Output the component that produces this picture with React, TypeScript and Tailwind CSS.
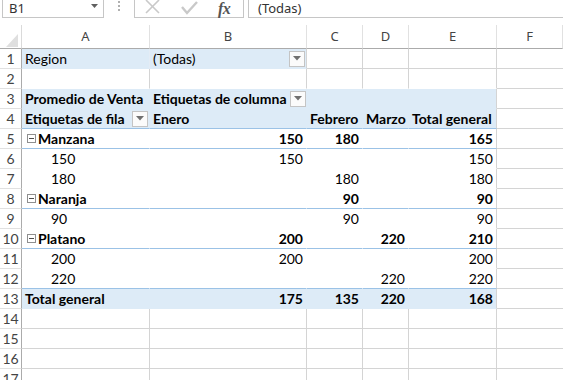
import React from "react";

type CellDef = {
  t?: string;
  b?: boolean;
  right?: boolean;
  indent?: boolean;
  minus?: boolean;
  drop?: "end" | "after";
};

type RowDef = {
  n: number;
  cells: CellDef[]; // A..E
  fill?: number; // how many columns (from A) get the blue fill
  pivot?: boolean;
  blue?: boolean; // blue line under the row
  noBottom?: boolean; // gridline hidden by the row below
};

const rows: RowDef[] = [
  { n: 1, fill: 2, cells: [{ t: "Region" }, { t: "(Todas)", drop: "end" }, {}, {}, {}] },
  { n: 2, noBottom: true, cells: [{}, {}, {}, {}, {}] },
  {
    n: 3,
    fill: 5,
    pivot: true,
    cells: [{ t: "Promedio de Venta", b: true }, { t: "Etiquetas de columna", b: true, drop: "after" }, {}, {}, {}],
  },
  {
    n: 4,
    fill: 5,
    pivot: true,
    blue: true,
    cells: [
      { t: "Etiquetas de fila", b: true, drop: "end" },
      { t: "Enero", b: true },
      { t: "Febrero", b: true },
      { t: "Marzo", b: true },
      { t: "Total general", b: true },
    ],
  },
  {
    n: 5,
    pivot: true,
    blue: true,
    cells: [
      { t: "Manzana", b: true, minus: true },
      { t: "150", b: true, right: true },
      { t: "180", b: true, right: true },
      {},
      { t: "165", b: true, right: true },
    ],
  },
  { n: 6, pivot: true, cells: [{ t: "150", indent: true }, { t: "150", right: true }, {}, {}, { t: "150", right: true }] },
  { n: 7, pivot: true, cells: [{ t: "180", indent: true }, {}, { t: "180", right: true }, {}, { t: "180", right: true }] },
  {
    n: 8,
    pivot: true,
    blue: true,
    cells: [{ t: "Naranja", b: true, minus: true }, {}, { t: "90", b: true, right: true }, {}, { t: "90", b: true, right: true }],
  },
  { n: 9, pivot: true, cells: [{ t: "90", indent: true }, {}, { t: "90", right: true }, {}, { t: "90", right: true }] },
  {
    n: 10,
    pivot: true,
    blue: true,
    cells: [
      { t: "Platano", b: true, minus: true },
      { t: "200", b: true, right: true },
      {},
      { t: "220", b: true, right: true },
      { t: "210", b: true, right: true },
    ],
  },
  { n: 11, pivot: true, cells: [{ t: "200", indent: true }, { t: "200", right: true }, {}, {}, { t: "200", right: true }] },
  {
    n: 12,
    pivot: true,
    blue: true,
    cells: [{ t: "220", indent: true }, {}, {}, { t: "220", right: true }, { t: "220", right: true }],
  },
  {
    n: 13,
    fill: 5,
    pivot: true,
    noBottom: true,
    cells: [
      { t: "Total general", b: true },
      { t: "175", b: true, right: true },
      { t: "135", b: true, right: true },
      { t: "220", b: true, right: true },
      { t: "168", b: true, right: true },
    ],
  },
  { n: 14, cells: [{}, {}, {}, {}, {}] },
  { n: 15, cells: [{}, {}, {}, {}, {}] },
  { n: 16, cells: [{}, {}, {}, {}, {}] },
  { n: 17, cells: [{}, {}, {}, {}, {}] },
];

const DropButton = () => (
  <div className="w-[16px] h-[16px] shrink-0 border border-[#c4c4c4] bg-[#fbfbfb] flex items-center justify-center">
    <svg width="8" height="5" viewBox="0 0 8 5">
      <path d="M0 0 L8 0 L4 4.5 Z" fill="#707070" />
    </svg>
  </div>
);

const MinusBox = () => (
  <div className="w-[9px] h-[9px] shrink-0 border border-[#8f8f8f] bg-white flex items-center justify-center mr-[2px]">
    <div className="w-[5px] h-[1px] bg-[#4d4d4d]" />
  </div>
);

function Cell({ c, row, col }: { c: CellDef; row: RowDef; col: number }) {
  const filled = row.fill !== undefined && col < row.fill;
  let right = "border-r-[#d4d4d4]";
  let bottom = "border-b-[#d4d4d4]";
  if (row.pivot) {
    right = col === 4 ? "border-r-[#d4d4d4]" : "border-r-transparent";
    bottom = row.blue ? "border-b-[#9bc2e6]" : "border-b-transparent";
  }
  if (row.n === 1 && col === 0) right = "border-r-[#e4ecf5]";
  if (row.noBottom) bottom = "border-b-transparent";
  if (row.n === 1 && col < 2) bottom = "border-b-transparent";

  return (
    <div
      className={`h-[20px] border-r border-b ${right} ${bottom} ${filled ? "bg-[#ddebf7]" : "bg-white"} flex items-center overflow-visible whitespace-nowrap leading-[19px] ${
        c.right ? "justify-end pr-[3px]" : c.drop === "end" ? "justify-between pl-[3px] pr-[1px]" : "pl-[3px]"
      } ${c.indent ? "pl-[29px]" : ""} ${c.minus ? "pl-[5px]" : ""} ${c.b ? "font-bold" : ""}`}
    >
      {c.minus && <MinusBox />}
      {c.t && <span>{c.t}</span>}
      {c.drop === "after" && (
        <span className="ml-[4px]">
          <DropButton />
        </span>
      )}
      {c.drop === "end" && <DropButton />}
    </div>
  );
}

export default function App() {
  const cols = ["A", "B", "C", "D", "E", "F"];
  return (
    <div className="w-[563px] h-[380px] overflow-hidden bg-white text-black">
      {/* formula bar */}
      <div className="h-[25px] flex items-start font-['Noto_Sans',sans-serif] text-[13px] text-[#333]">
        <div className="w-[102px] h-[18px] ml-[2px] border-l border-r border-b border-[#c6c6c6] flex items-center justify-between pl-[6px] pr-[5px]">
          <span className="leading-[14px] -mt-[1px]">B1</span>
          <svg width="7" height="4" viewBox="0 0 7 4" className="-mt-[6px]">
            <path d="M0 0 L7 0 L3.5 4 Z" fill="#606060" />
          </svg>
        </div>
        <div className="w-[30px] h-[16px] flex flex-col items-center justify-start gap-[2px] pt-[1px]">
          <div className="w-[2px] h-[2px] bg-[#b0b0b0]" />
          <div className="w-[2px] h-[2px] bg-[#b0b0b0]" />
          <div className="w-[2px] h-[2px] bg-[#b0b0b0]" />
        </div>
        <div className="w-[110px] h-[18px] border-l border-r border-b border-[#c6c6c6] flex items-center pl-[10px] gap-[20px]">
          <svg width="16" height="14" viewBox="0 0 16 14" className="-mt-[4px]">
            <path d="M1 0 L14 13 M14 0 L1 13" stroke="#c9c9c9" strokeWidth="1.6" fill="none" />
          </svg>
          <svg width="17" height="14" viewBox="0 0 17 14" className="-mt-[2px]">
            <path d="M1 6 L6 12 L16 1" stroke="#c9c9c9" strokeWidth="2.4" fill="none" />
          </svg>
          <span className="font-['Liberation_Serif',serif] italic font-bold text-[16px] leading-[16px] text-[#555] tracking-[-0.5px] pr-[2px]">
            fx
          </span>
        </div>
        <div className="flex-1 h-[18px] ml-[4px] border-l border-b border-[#c6c6c6] flex items-center pl-[9px]">
          <span className="leading-[14px] -mt-[1px]">(Todas)</span>
        </div>
      </div>

      {/* sheet */}
      <div className="font-['Lato',sans-serif] text-[14px]">
        <div className="grid grid-cols-[22px_128px_157px_56px_46px_88px_1fr]">
          <div className="h-[24px] border-r border-b border-r-[#dadada] border-b-[#ababab] relative">
            <svg width="12" height="13" viewBox="0 0 12 13" className="absolute right-[3px] bottom-[1px]">
              <path d="M12 0 L12 13 L0 13 Z" fill="#dfdfdf" />
            </svg>
          </div>
          {cols.map((c) => (
            <div
              key={c}
              className="h-[24px] border-r border-b border-r-[#e1e1e1] border-b-[#ababab] flex items-center justify-center text-[#444] font-['Noto_Sans',sans-serif] text-[13px] pt-[1px]"
            >
              {c}
            </div>
          ))}

          {rows.map((row) => (
            <React.Fragment key={row.n}>
              <div className="h-[20px] border-r border-b border-r-[#ababab] border-b-[#e1e1e1] flex items-center justify-center text-[#444] leading-[19px]">
                {row.n}
              </div>
              {row.cells.map((c, i) => (
                <Cell key={i} c={c} row={row} col={i} />
              ))}
              <div className="h-[20px] border-b border-b-[#d4d4d4]" />
            </React.Fragment>
          ))}
        </div>
      </div>
    </div>
  );
}
